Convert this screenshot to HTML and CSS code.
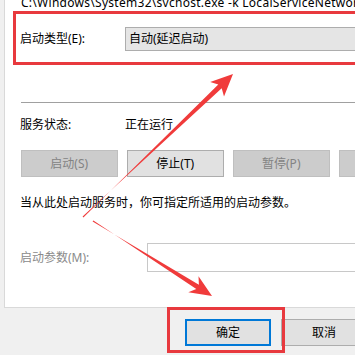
FILE: index.html
```html
<!DOCTYPE html>
<html>
<head>
<meta charset="utf-8">
<link rel="stylesheet" href="styles.css">
</head>
<body>
<div class="panel">
  <div class="path">C:\Windows\System32\svchost.exe -k LocalServiceNetworkRestricted -p</div>
  <div class="row type-row">
    <div class="label">启动类型(E):</div>
    <div class="select">自动(延迟启动)</div>
  </div>
  <div class="sep"></div>
  <div class="row status-row">
    <div class="label">服务状态:</div>
    <div class="value">正在运行</div>
  </div>
  <div class="btn-row">
    <div class="btn disabled">启动(S)</div>
    <div class="btn">停止(T)</div>
    <div class="btn disabled">暂停(P)</div>
    <div class="btn disabled">恢复(R)</div>
  </div>
  <div class="desc">当从此处启动服务时，你可指定所适用的启动参数。</div>
  <div class="row param-row">
    <div class="label gray">启动参数(M):</div>
    <div class="input"></div>
  </div>
</div>
<div class="footer">
  <div class="btn ok">确定</div>
  <div class="btn">取消</div>
</div>

<div class="hl hl-type"></div>
<div class="hl hl-ok"></div>
<svg class="arrows" width="355" height="355" viewBox="0 0 355 355">
  <polygon points="82.6,216.6 221.7,88.2 224,96.4 233,74 210.2,82.0 218.3,84.6 83.4,217.4" fill="#f03b3b"/>
  <polygon points="93.4,220.6 196.3,289.0 188.3,292.3 212,296 198.5,276.3 198.9,284.8 92.6,221.4" fill="#f03b3b"/>
</svg>
</body>
</html>
```

FILE: styles.css
```css
html, body {
  margin: 0;
  padding: 0;
  width: 355px;
  height: 355px;
  overflow: hidden;
}
body {
  background: #f0f0f0;
  font-family: "Noto Sans", "Noto Sans CJK SC", sans-serif;
  font-size: 12px;
  color: #000;
  position: relative;
}
.panel {
  margin-left: 4px;
  height: 308px;
  box-sizing: border-box;
  background: #fff;
  border-left: 1px solid #d9d9d9;
  border-bottom: 1px solid #d9d9d9;
  padding-left: 15px;
  display: flex;
  flex-direction: column;
  white-space: nowrap;
}
.path {
  margin-top: -5px;
  height: 16px;
  line-height: 16px;
  letter-spacing: 0.28px;
  margin-left: 1px;
}
.row {
  display: flex;
  align-items: center;
}
.label {
  width: 105px;
  flex: none;
  line-height: 16px;
}
.gray { color: #8a8a8a; }
.type-row {
  margin-top: 16px;
  height: 24px;
}
.select {
  flex: none;
  width: 260px;
  height: 24px;
  box-sizing: border-box;
  background: #e5e5e5;
  border: 1px solid #adadad;
  line-height: 22px;
  padding-left: 3px;
}
.sep {
  margin-top: 51px;
  height: 1px;
  background: #a0a0a0;
  margin-left: 1px;
}
.status-row {
  margin-top: 14px;
  height: 16px;
}
.value { line-height: 16px; }
.btn-row {
  margin-top: 17px;
  display: flex;
  gap: 9.5px;
  margin-left: 1px;
}
.btn {
  flex: none;
  width: 96.5px;
  height: 27px;
  box-sizing: border-box;
  background: #e1e1e1;
  border: 1px solid #adadad;
  text-align: center;
  line-height: 25px;
  color: #000;
}
.btn.disabled {
  background: #cccccc;
  border-color: #bfbfbf;
  color: #838383;
}
.desc {
  margin-top: 18px;
  line-height: 16px;
}
.param-row {
  margin-top: 32px;
  height: 29px;
}
.param-row .label {
  width: 127px;
}
.input {
  flex: none;
  width: 240px;
  height: 29px;
  box-sizing: border-box;
  border: 1px solid #c8c8c8;
  background: #fff;
}
.footer {
  margin-top: 11px;
  margin-left: 185px;
  display: flex;
  gap: 10px;
}
.footer .btn {
  width: 86px;
}
.btn.ok {
  border: 2px solid #0078d7;
  line-height: 23px;
}
.hl {
  position: absolute;
  border: 3px solid #e8393e;
  box-sizing: border-box;
}
.hl-type {
  left: 13px;
  top: 11px;
  width: 360px;
  height: 54px;
}
.hl-ok {
  left: 167px;
  top: 307px;
  width: 118px;
  height: 46px;
}
.arrows {
  position: absolute;
  left: 0;
  top: 0;
}
```
